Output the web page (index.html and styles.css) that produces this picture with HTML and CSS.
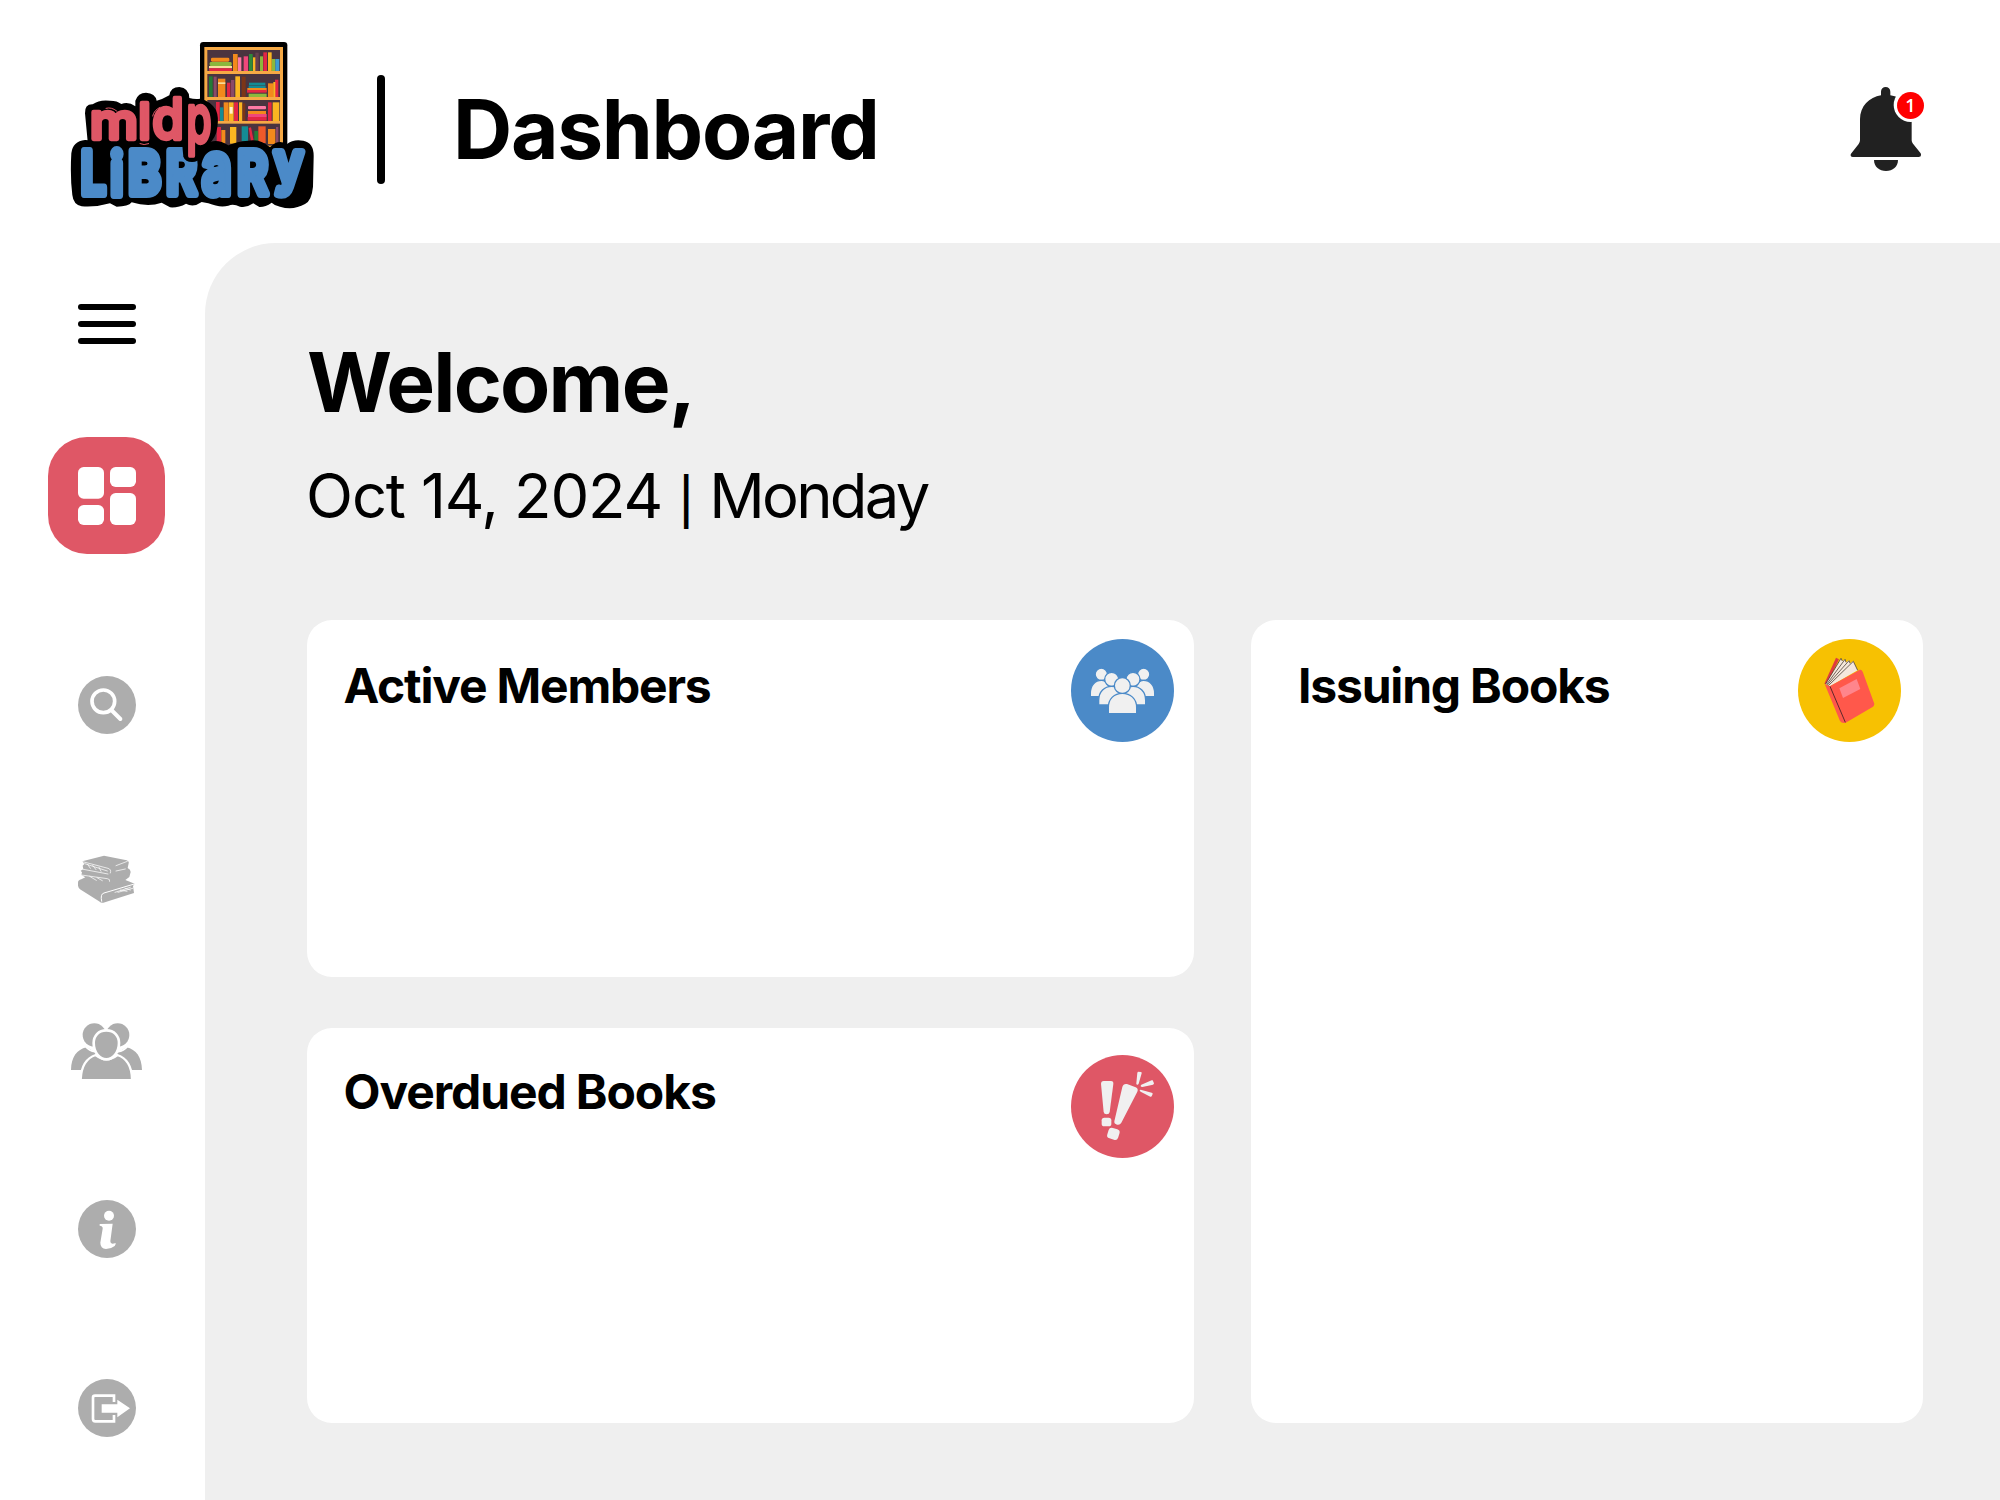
FILE: index.html
```html
<!DOCTYPE html>
<html lang="en">
<head>
<meta charset="utf-8">
<title>MLDP Library – Dashboard</title>
<link rel="stylesheet" href="styles.css">
</head>
<body>
<header class="topbar">
  <svg class="logo" viewBox="0 0 810 570" role="img" aria-label="mldp Library">
    <rect x="420" y="36" width="262" height="330" rx="10"/>
    <rect x="433" y="51" width="236" height="300" fill="#f6a945"/>
    <g fill="#4a343f">
      <rect x="442" y="60" width="218" height="63"/><rect x="442" y="132" width="218" height="69"/>
      <rect x="442" y="210" width="218" height="63"/><rect x="442" y="281" width="218" height="66"/>
    </g>
    <g fill="#f28a1c">
      <rect x="453" y="83" width="55" height="12" rx="4"/><rect x="519" y="72" width="14" height="51"/><rect x="474" y="146" width="22" height="55"/>
      <rect x="491" y="217" width="15" height="56"/><rect x="562" y="174" width="58" height="11"/><rect x="624" y="160" width="17" height="41"/>
      <rect x="564" y="243" width="54" height="9"/><rect x="595" y="289" width="22" height="50" fill="#ee5a2a"/><rect x="624" y="297" width="22" height="45"/><rect x="484" y="300" width="12" height="40"/>
    </g>
    <g fill="#8bb83c">
      <rect x="449" y="96" width="66" height="12" rx="4"/><rect x="567" y="72" width="11" height="51" fill="#2f8a3a"/><rect x="600" y="79" width="9" height="44"/>
      <rect x="635" y="87" width="11" height="36"/><rect x="566" y="191" width="54" height="10"/>
    </g>
    <g fill="#f8df9b"><rect x="447" y="108" width="69" height="7"/><rect x="474" y="157" width="22" height="5"/></g>
    <g fill="#e32644">
      <rect x="447" y="115" width="69" height="8" rx="3"/><rect x="551" y="79" width="13" height="44" fill="#f0477a"/><rect x="610" y="67" width="11" height="56"/>
      <rect x="501" y="158" width="10" height="43"/><rect x="561" y="180" width="59" height="8"/><rect x="645" y="149" width="10" height="52"/>
      <rect x="564" y="252" width="56" height="9" fill="#f0477a"/><rect x="563" y="261" width="57" height="11"/><rect x="624" y="217" width="11" height="56"/><rect x="468" y="216" width="11" height="57"/>
      <rect x="522" y="217" width="12" height="56"/><rect x="470" y="291" width="13" height="50"/><path d="M566 294l7-2 8 40-8 2z"/>
    </g>
    <g fill="#fbb621">
      <rect x="579" y="82" width="11" height="41"/><rect x="624" y="67" width="11" height="56"/><rect x="526" y="139" width="14" height="62"/>
      <rect x="640" y="156" width="6" height="45"/><rect x="507" y="217" width="14" height="56"/><rect x="537" y="217" width="10" height="56"/><rect x="638" y="217" width="20" height="56"/><rect x="510" y="291" width="19" height="50"/>
    </g>
    <rect x="509" y="231" width="9" height="20" fill="#fff3d0"/>
    <g fill="#ff7aa5"><rect x="534" y="82" width="10" height="41"/><rect x="564" y="228" width="54" height="10" rx="3"/></g>
    <g fill="#237b36"><rect x="447" y="139" width="11" height="62"/><rect x="583" y="303" width="11" height="38"/></g>
    <g fill="#8a4a68"><rect x="461" y="140" width="9" height="61"/><rect x="513" y="150" width="10" height="51"/><rect x="586" y="68" width="10" height="55" fill="#67404f"/><rect x="648" y="291" width="7" height="50"/></g>
    <g fill="#148c94"><rect x="480" y="232" width="10" height="41"/><rect x="567" y="158" width="49" height="8"/><rect x="566" y="167" width="51" height="7"/><rect x="545" y="289" width="19" height="45"/><rect x="646" y="87" width="12" height="36" fill="#3b9bd2"/></g>
    <rect x="545" y="140" width="12" height="61" fill="#7c3517"/><rect x="548" y="220" width="8" height="53" fill="#7c3517"/>
    <path d="M84 345L75 250Q74 222 98 223Q118 208 150 212Q172 212 184 222Q206 214 226 229V212Q234 188 258 188Q286 190 290 212Q308 208 328 196Q332 171 358 171Q387 174 388 204Q404 208 420 206Q452 213 468 240Q477 262 472 292Q468 326 444 344L430 380H100z"/>
    <path d="M34 370Q38 334 75 330Q100 330 118 344Q160 326 200 334L450 336Q474 326 505 346Q530 334 565 332Q600 326 630 352Q655 326 680 343Q700 326 730 332Q762 338 761 380L759 470Q755 512 735 522Q700 542 660 530Q645 528 635 518Q615 532 598 531L580 520Q560 534 540 530Q520 520 505 527Q480 534 445 520L425 516Q400 534 378 521Q355 534 330 532L305 518Q265 532 215 517Q205 530 170 530L150 520Q110 532 65 529Q40 524 37 495Q30 440 34 370z"/>
    <g class="logo-bottom">
      <text transform="translate(100 493) scale(.76 1)" font-size="176">L</text>
      <text transform="translate(170 494) scale(.82 1)" font-size="176">i</text>
      <text transform="translate(254 491) scale(.84 1)" font-size="177">B</text>
      <text transform="translate(364 491) scale(.8 1)" font-size="177">R</text>
      <text transform="translate(470 492) scale(.72 1)" font-size="218">a</text>
      <text transform="translate(578 493) scale(.8 1)" font-size="177">R</text>
      <text transform="translate(686 459) scale(.86 1)" font-size="170">y</text>
    </g>
    <path d="M365 325H422V380Q415 396 396 396Q376 396 370 380z"/>
    <g class="logo-top">
      <text transform="translate(162 326) scale(1.09 1)" font-size="150">m</text>
      <text transform="translate(254 328)" font-size="150">l</text>
      <text transform="translate(324 327) scale(.9 1)" font-size="170">d</text>
      <text transform="translate(417 337) scale(.62 1)" font-size="196">p</text>
    </g>
    <path class="logo-ticks" d="M138 235q16-5 32 8M278 258q4-18 22-26M240 341q12 6 26 0M418 334q20-2 26-14"/>
  </svg>
  <span class="divider"></span>
  <h1 class="page-title">Dashboard</h1>
  <button class="bell" aria-label="Notifications">
    <svg viewBox="60 48 216 258" width="72" height="86">
      <path fill="#212121" d="M153 76V65a14 14 0 0 1 28 0v11c36 6 64 32 64 72v63q0 5 4 10l23 29q4 10-6 11H68q-9-1-5-10l23-29q4-6 4-11v-63c0-40 28-66 63-72z"/>
      <path fill="#212121" d="M132 270h72c0 20-16 33-36 33s-36-13-36-33z"/>
      <circle cx="242" cy="105" r="51" fill="#fff"/>
    </svg>
    <span class="badge">1</span>
  </button>
</header>
<div class="layout">
  <nav class="sidebar">
    <button class="burger" aria-label="Menu"><i></i><i></i><i></i></button>
    <a class="tile" aria-label="Dashboard">
      <svg viewBox="144 561 174 174" width="58" height="58" fill="#fff">
        <rect x="144" y="561" width="78" height="95" rx="17"/><rect x="240" y="561" width="78" height="60" rx="17"/>
        <rect x="144" y="675" width="78" height="60" rx="17"/><rect x="240" y="639" width="78" height="96" rx="17"/>
      </svg>
    </a>
    <a class="nav-item search" aria-label="Search">
      <svg viewBox="54 48 174 174" width="58" height="58">
        <circle cx="141" cy="135" r="87" fill="#adadad"/>
        <circle cx="130" cy="124" r="34" fill="none" stroke="#fff" stroke-width="11"/>
        <path d="M154 150l27 27" stroke="#fff" stroke-width="12" stroke-linecap="round"/>
      </svg>
    </a>
    <a class="nav-item books" aria-label="Books">
      <svg viewBox="54 585 174 144" width="58" height="48">
        <path fill="#adadad" d="M67 604L132 587 200 601Q208 604 206 610L203 624Q212 628 212 636L208 651 196 660 224 671 219 678 222 699 130 728Q124 730 117 724L60 688Q52 681 54 668Q54 660 64 658L76 652 64 645 66 637 62 632 70 628 68 617 73 612z"/>
        <g fill="none" stroke="#fff" stroke-width="2.200" stroke-linecap="round">
          <path d="M68 605L144 625Q155 628 151 639M70 628L144 642M168 617L202 604M74 611L142 633M83 613L91 625M98 616L108 629M117 622L123 634"/>
          <path d="M64 645L142 656Q151 657 149 664M89 649L109 661M111 653L127 662M168 633L196 627"/>
          <path stroke-width="3" d="M125 724Q120 702 132 699L223 672"/>
          <path d="M165 697L211 682M174 697L218 685M181 690L201 694M195 685L211 690"/>
        </g>
      </svg>
    </a>
    <a class="nav-item members" aria-label="Members">
      <svg viewBox="33 69 213 168" width="71" height="56">
        <g fill="#adadad">
          <circle cx="103" cy="105" r="35"/><circle cx="173" cy="105" r="35"/>
          <path d="M33 210C34 171 50 149 80 142L110 160 80 210zM246 210C245 171 229 149 199 142L170 160 200 210z"/>
        </g>
        <path d="M76 138Q90 156 108 154M203 138Q189 156 171 154" fill="none" stroke="#fff" stroke-width="6"/>
        <path fill="#adadad" stroke="#fff" stroke-width="7" d="M62 241C63 200 80 174 107 165Q140 190 172 165C199 174 216 200 216 241z"/>
        <path fill="#adadad" stroke="#fff" stroke-width="8" d="M139 91C163 91 177 108 177 129C177 158 158 178 139 178S101 158 101 129C101 108 115 91 139 91z"/>
      </svg>
    </a>
    <a class="nav-item info" aria-label="Information">
      <svg viewBox="54 600 174 174" width="58" height="58">
        <circle cx="141" cy="687" r="87" fill="#adadad"/>
        <circle cx="147" cy="647" r="15" fill="#fff"/>
        <path fill="#fff" d="M119 672L158 671 151 724Q151 735 167 729Q168 732 164 738Q153 747 138 747Q121 746 121 728L128 686Q129 678 119 677z"/>
      </svg>
    </a>
    <a class="nav-item logout" aria-label="Log out">
      <svg viewBox="54 57 174 174" width="58" height="58">
        <circle cx="141" cy="144" r="87" fill="#adadad"/>
        <path d="M162 126V107H105Q99 107 99 113V177Q99 184 106 184H162V165" fill="none" stroke="#fff" stroke-width="8"/>
        <path fill="#fff" d="M125 133H172V119L210 145 172 172V158H125z"/>
      </svg>
    </a>
  </nav>
  <main class="content">
    <h2 class="welcome">Welcome,</h2>
    <p class="date">Oct 14, 2024 <span class="bar">|</span> <span class="day">Monday</span></p>
    <div class="cards">
      <section class="card active-members">
        <h3>Active Members</h3>
        <svg class="card-icon" viewBox="33 87 309 309">
          <circle cx="187.500" cy="241.500" r="154.500" fill="#4b8ac8"/>
          <g fill="#f0f0f0" stroke="#4b8ac8" stroke-width="4">
            <circle cx="124" cy="193" r="18.500"/><circle cx="251" cy="193" r="18.500"/>
            <path d="M91 260V250C91 225 106 211 124 211S150 225 150 260zM284 260V250C284 225 269 211 251 211S225 225 225 260z"/>
            <circle cx="155" cy="208" r="21"/><circle cx="219" cy="208" r="21"/>
            <path d="M116 285V271C116 244 134 229 155 229S194 250 194 285zM257 285V271C257 244 239 229 219 229S180 250 180 285z"/>
            <circle cx="187" cy="227" r="24"/>
            <path d="M145 311V293C145 266 163 250 187 250S230 266 230 293V311z"/>
          </g>
        </svg>
      </section>
      <section class="card issuing-books">
        <h3>Issuing Books</h3>
        <svg class="card-icon" viewBox="25 87 309 309">
          <circle cx="179.500" cy="241.500" r="154.500" fill="#f7c102"/>
          <path fill="#df3c3e" d="M139 143L148 148 112 222 104 221z"/>
          <path fill="#f5e7dc" d="M108 222L154 145 159 153 166 148 170 157 178 151 182 160 191 153 204 181 121 229z"/>
          <path d="M108 222L154 145 158 153M111 223L166 148 169 157M113 225L178 152 181 160M116 227L191 154 204 181" fill="none" stroke="#3c3028" stroke-width="2.200"/>
          <path fill="#ff584b" d="M105 222L120 229 211 179Q216 178 219 185L254 281Q254 287 250 290L168 338Q157 342 151 333z"/>
          <path d="M121 229L167 337" stroke="#60272b" stroke-width="3"/>
          <path fill="#ff858c" d="M149 235L201 207 212 237 160 264z"/>
        </svg>
      </section>
      <section class="card overdued-books">
        <h3>Overdued Books</h3>
        <svg class="card-icon" viewBox="33 105 309 309">
          <circle cx="187.500" cy="259.500" r="154.500" fill="#df5766"/>
          <g fill="#f0f0f0">
            <path d="M131 183H153Q161 183 160 192L149 276Q148 283 140 283T131 276L123 192Q123 183 131 183z"/>
            <rect x="125" y="293" width="29" height="26" rx="8"/>
            <path d="M201 192L227 202Q236 206 232 215L184 308Q180 316 171 314T163 304L187 201Q190 190 201 192z"/>
            <rect x="143" y="325" width="34" height="33" rx="10" transform="rotate(18 160 342)"/>
            <path d="M234 155L243 156Q246 157 245 160L236 191Q234 195 231 194T229 190L232 158zM278 181L282 190Q282 193 279 194L247 201Q243 201 242 199T244 194L275 181zM242 209L275 218Q279 219 278 222L275 229Q274 231 271 230L242 215Q239 213 239 211T242 209z"/>
          </g>
        </svg>
      </section>
    </div>
  </main>
</div>
</body>
</html>
```
FILE: styles.css
```css
* { box-sizing: border-box; }
body {
  margin: 0;
  width: 2000px;
  height: 1500px;
  overflow: hidden;
  background: #fff;
  color: #000;
  font-family: Inter, "Liberation Sans", sans-serif;
}
h1, h2, h3, p { margin: 0; font-weight: 700; }
button { padding: 0; border: 0; background: none; font: inherit; }
svg { display: block; }

.topbar { display: flex; align-items: flex-start; height: 243px; padding: 30px 77px 0 60px; }
.logo { width: 270px; height: 190px; flex: none; }
.logo text { font-family: Inter, sans-serif; text-anchor: middle; }
.logo-top { font-weight: 500; fill: #df5766; stroke: #df5766; stroke-width: 13; stroke-linejoin: round; }
.logo-bottom { font-weight: 600; fill: #4b8ac8; stroke: #4b8ac8; stroke-width: 24; stroke-linejoin: round; }
.logo-ticks { fill: none; stroke: #df5766; stroke-width: 3; stroke-linecap: round; }
.divider { width: 8px; height: 109px; margin: 45px 0 0 47px; border-radius: 4px; background: #000; }
.page-title { margin: 50px 0 0 68px; font-size: 82px; line-height: 100px; letter-spacing: -1.3px; }
.bell { position: relative; width: 72px; height: 86px; margin: 56px 1px 0 auto; }
.badge {
  position: absolute;
  top: 6px;
  left: 47px;
  width: 27px;
  height: 27px;
  border-radius: 50%;
  background: #f00;
  color: #fff;
  font: 600 18px/27px "Open Sans", sans-serif;
  text-align: center;
}

.layout { display: flex; height: 1257px; }
.sidebar { display: flex; flex-direction: column; align-items: center; width: 205px; padding: 61px 0 0 8px; }
.burger { display: flex; flex-direction: column; justify-content: space-between; width: 58px; height: 40px; }
.burger i { height: 6px; border-radius: 3px; background: #000; }
.tile { display: grid; place-items: center; width: 117px; height: 117px; margin-top: 93px; border-radius: 39px; background: #df5766; }
.search { margin-top: 122px; }
.books { margin-top: 121px; }
.members { margin-top: 120px; }
.info { margin-top: 121px; }
.logout { margin-top: 121px; }

.content { flex: 1; padding: 90px 77px 76px 102px; border-top-left-radius: 71px; background: #efefef; }
.welcome { font-size: 82px; line-height: 100px; letter-spacing: -1.8px; }
.date { margin: 25px 0 0 -1px; font-weight: 400; font-size: 61.5px; line-height: 76px; letter-spacing: -1.15px; }
.bar { font-size: 46px; line-height: 1; font-weight: 500; }
.day { letter-spacing: -2.7px; }
.cards {
  display: grid;
  grid-template-columns: 887px 672px;
  grid-template-rows: 357px 395px;
  gap: 51px 57px;
  margin-top: 86px;
}
.card { display: flex; justify-content: space-between; align-items: flex-start; border-radius: 25px; background: #fff; padding: 19px 20px 0 36.5px; }
.card h3 { margin-top: 17px; font-size: 48px; line-height: 60px; letter-spacing: -1.2px; }
.card-icon { width: 103px; height: 103px; }
.issuing-books { grid-column: 2; grid-row: 1 / 3; padding: 19px 22px 0 47px; }
.overdued-books { padding-top: 27px; }
.overdued-books h3 { margin-top: 7px; letter-spacing: -1.1px; }
```
